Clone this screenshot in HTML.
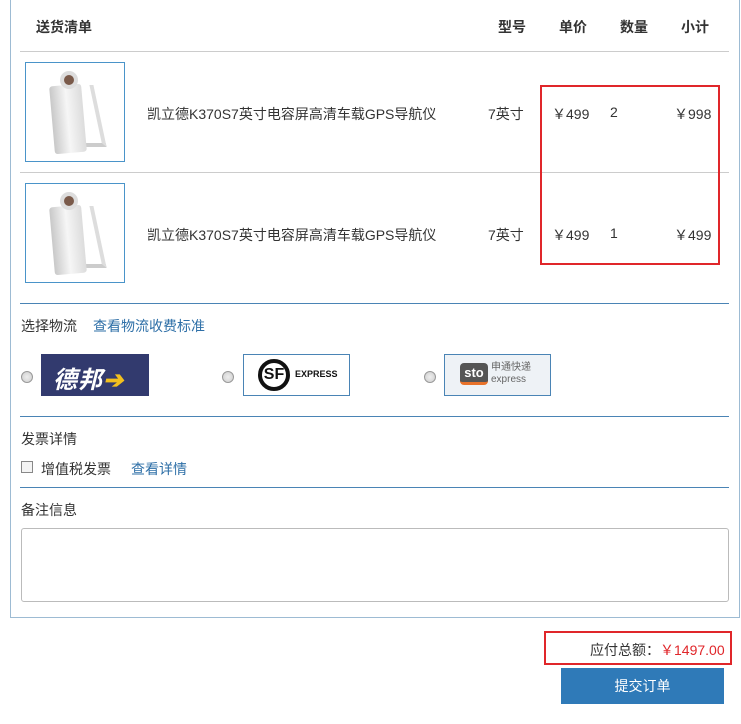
<!DOCTYPE html>
<html><head><meta charset="utf-8"><style>
*{margin:0;padding:0;box-sizing:border-box}
body{width:741px;height:724px;background:#fff;font-family:"Liberation Sans","Microsoft YaHei","Noto Sans CJK SC",sans-serif;font-size:14px;color:#333;position:relative;overflow:hidden}
.a{position:absolute}
.box{left:10px;top:-1px;width:730px;height:619px;border:1px solid #9dbbd3}
.hl{height:1px;background:#ccc;left:20px;width:709px}
.bl{height:1px;background:#4a84b5;left:20px;width:709px}
.th{top:17px;font-weight:bold;font-size:14px;color:#333}
.img{width:100px;height:100px;border:1px solid #4a94c9;left:25px;background:#fff}
.ph{position:absolute;left:26px;top:22px;width:32px;height:68px;background:linear-gradient(90deg,#c8c8c8,#f6f6f6,#dcdcdc);border-radius:3px;transform:rotate(-5deg)}
.ph2{position:absolute;left:52px;top:22px;width:22px;height:62px;border-right:4px solid #ddd;border-bottom:4px solid #ccc;transform:skewX(12deg)}
.lens{position:absolute;left:34px;top:8px;width:18px;height:18px;border-radius:50%;background:#7a5a4a;border:4px solid #ddd}
.red{border:2px solid #e0262a}
.radio{width:12px;height:12px;border-radius:50%;border:1px solid #999;background:radial-gradient(#eee,#ccc)}
.lk{color:#2e6fa7}
</style></head><body>
<div class="a box"></div>
<div class="a th" style="left:36px">送货清单</div>
<div class="a th" style="left:498px">型号</div>
<div class="a th" style="left:559px">单价</div>
<div class="a th" style="left:620px">数量</div>
<div class="a th" style="left:681px">小计</div>
<div class="a hl" style="top:51px"></div>

<div class="a img" style="top:62px"><div class="ph2"></div><div class="ph"></div><div class="lens"></div></div>
<div class="a" style="left:147px;top:104px">凯立德K370S7英寸电容屏高清车载GPS导航仪</div>
<div class="a" style="left:488px;top:104px">7英寸</div>
<div class="a" style="left:552px;top:104px">￥499</div>
<div class="a" style="left:610px;top:104px">2</div>
<div class="a" style="left:674px;top:104px">￥998</div>
<div class="a hl" style="top:172px"></div>

<div class="a img" style="top:183px"><div class="ph2"></div><div class="ph"></div><div class="lens"></div></div>
<div class="a" style="left:147px;top:225px">凯立德K370S7英寸电容屏高清车载GPS导航仪</div>
<div class="a" style="left:488px;top:225px">7英寸</div>
<div class="a" style="left:552px;top:225px">￥499</div>
<div class="a" style="left:610px;top:225px">1</div>
<div class="a" style="left:674px;top:225px">￥499</div>

<div class="a red" style="left:540px;top:85px;width:180px;height:180px"></div>

<div class="a bl" style="top:303px"></div>
<div class="a" style="left:21px;top:316px">选择物流</div>
<div class="a lk" style="left:93px;top:316px">查看物流收费标准</div>

<div class="a radio" style="left:21px;top:371px"></div>
<div class="a" style="left:41px;top:354px;width:108px;height:42px;background:#323a6e;color:#fff;font-size:24px;font-weight:bold;font-style:italic;padding:6px 0 0 12px;letter-spacing:1px">德邦<span style="color:#f2c01e">&#x2794;</span></div>
<div class="a radio" style="left:222px;top:371px"></div>
<div class="a" style="left:243px;top:354px;width:107px;height:42px;border:1px solid #4a84b5;background:#fff">
<div style="position:absolute;left:14px;top:4px;width:32px;height:32px;border:4px solid #111;border-radius:50%;font-weight:bold;font-size:16px;text-align:center;line-height:24px;color:#111">SF</div>
<div style="position:absolute;left:51px;top:14px;font-size:9px;font-weight:bold;color:#111">EXPRESS</div></div>
<div class="a radio" style="left:424px;top:371px"></div>
<div class="a" style="left:444px;top:354px;width:107px;height:42px;border:1px solid #4a84b5;background:#eef2f6">
<div style="position:absolute;left:15px;top:8px;width:28px;height:22px;background:#555;border-radius:4px;color:#fff;font-weight:bold;font-size:13px;text-align:center;line-height:20px;border-bottom:3px solid #e8722a">sto</div>
<div style="position:absolute;left:46px;top:7px;font-size:10px;color:#666;line-height:12px">申通快递<br>express</div></div>

<div class="a bl" style="top:416px"></div>
<div class="a" style="left:21px;top:429px">发票详情</div>
<div class="a" style="left:21px;top:461px;width:12px;height:12px;border:1px solid #888;background:#f4f4f4"></div>
<div class="a" style="left:41px;top:459px">增值税发票</div>
<div class="a lk" style="left:131px;top:459px">查看详情</div>

<div class="a bl" style="top:487px"></div>
<div class="a" style="left:21px;top:500px">备注信息</div>
<div class="a" style="left:21px;top:528px;width:708px;height:74px;border:1px solid #bbb;border-radius:3px"></div>

<div class="a red" style="left:544px;top:631px;width:188px;height:34px"></div>
<div class="a" style="left:590px;top:640px;font-size:14px">应付总额：<span style="color:#e0262a">￥1497.00</span></div>
<div class="a" style="left:561px;top:668px;width:163px;height:36px;background:#2f7ab8;color:#fff;font-size:14px;text-align:center;line-height:36px">提交订单</div>
</body></html>
